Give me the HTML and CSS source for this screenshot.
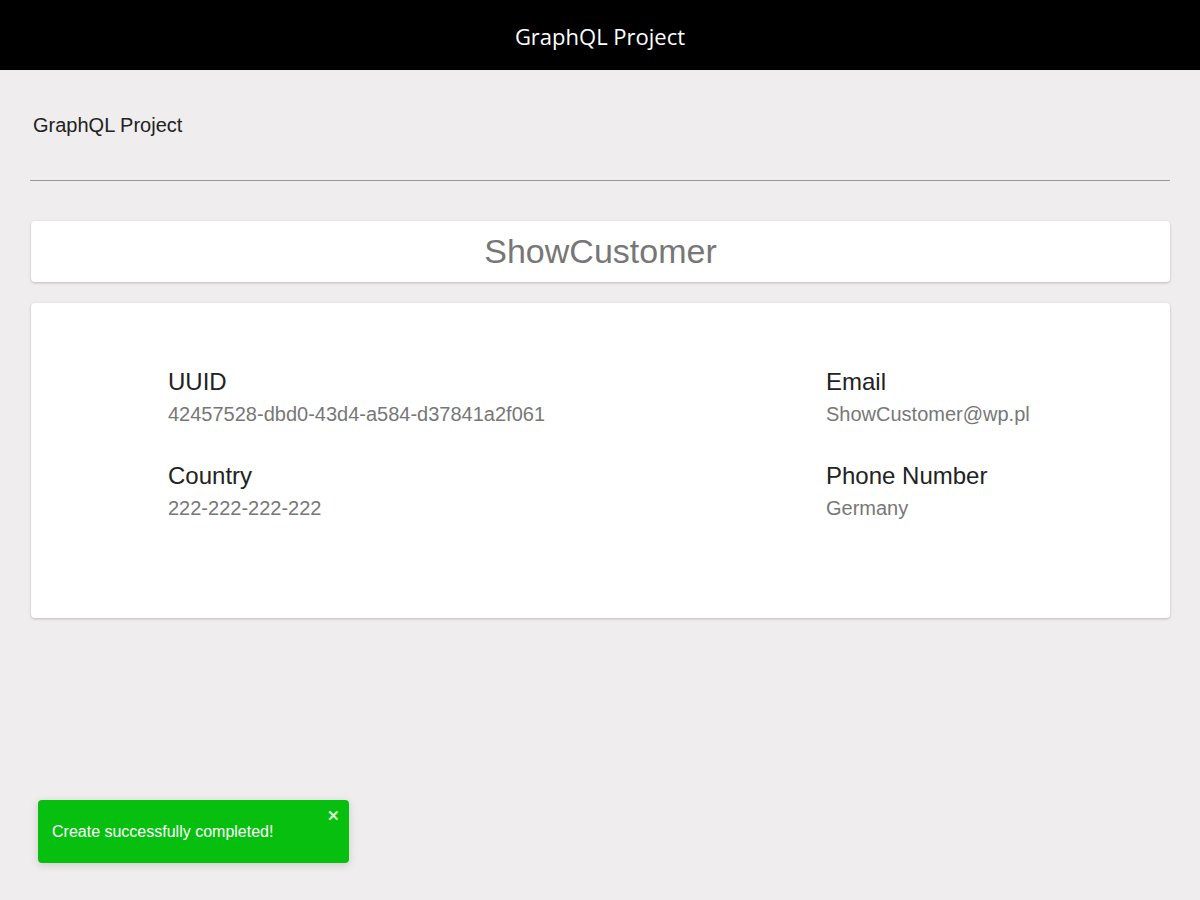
FILE: index.html
```html
<!DOCTYPE html>
<html lang="en">
<head>
<meta charset="utf-8">
<title>GraphQL Project</title>
<link rel="stylesheet" href="styles.css">
</head>
<body>
<header class="topbar">
  <span class="topbar-title">GraphQL Project</span>
</header>
<main class="page">
  <div class="breadcrumb">GraphQL Project</div>
  <hr class="divider">
  <section class="card title-card">
    <h1 class="card-title">ShowCustomer</h1>
  </section>
  <section class="card details-card">
    <div class="details-grid">
      <div class="field">
        <div class="field-label">UUID</div>
        <div class="field-value">42457528-dbd0-43d4-a584-d37841a2f061</div>
      </div>
      <div class="field">
        <div class="field-label">Email</div>
        <div class="field-value">ShowCustomer@wp.pl</div>
      </div>
      <div class="field">
        <div class="field-label">Country</div>
        <div class="field-value">222-222-222-222</div>
      </div>
      <div class="field">
        <div class="field-label">Phone Number</div>
        <div class="field-value">Germany</div>
      </div>
    </div>
  </section>
</main>
<div class="toast">
  <span class="toast-text">Create successfully completed!</span>
  <span class="toast-close">&#x2715;</span>
</div>
</body>
</html>
```

FILE: styles.css
```css
html, body {
  margin: 0;
  padding: 0;
}
body {
  background: #efeded;
  font-family: "Liberation Sans", Arial, sans-serif;
  color: #222;
  min-height: 900px;
}
.topbar {
  height: 70px;
  background: #000;
  display: flex;
  align-items: center;
  justify-content: center;
}
.topbar-title {
  color: #fff;
  font-family: "Open Sans", "Noto Sans", sans-serif;
  font-size: 22px;
  padding-top: 2px;
}
.page {
  padding: 0 30px;
}
.breadcrumb {
  font-size: 20px;
  line-height: 24px;
  color: #222;
  padding: 43px 0 0 3px;
  height: 67px;
}
.divider {
  margin: 0;
  border: 0;
  border-top: 1px solid #999;
}
.card {
  background: #fff;
  border-radius: 4px;
  box-shadow: 0 1px 3px rgba(0,0,0,0.22);
  margin-left: 1px;
}
.title-card {
  margin-top: 40px;
  height: 61px;
  display: flex;
  align-items: center;
  justify-content: center;
}
.card-title {
  margin: 0;
  font-weight: normal;
  font-size: 34px;
  color: #777;
}
.details-card {
  margin-top: 21px;
  height: 315px;
  box-sizing: border-box;
  padding: 64px 0 0 137px;
}
.details-grid {
  display: grid;
  grid-template-columns: 658px 1fr;
  row-gap: 30px;
}
.field-label {
  font-size: 24px;
  line-height: 30px;
  color: #222;
}
.field-value {
  font-size: 20px;
  line-height: 34px;
  color: #777;
}
.toast {
  position: absolute;
  left: 38px;
  top: 800px;
  width: 311px;
  height: 63px;
  box-sizing: border-box;
  background: #07bf0f;
  border-radius: 4px;
  box-shadow: 0 2px 8px rgba(0,0,0,0.15);
  color: #fff;
  display: flex;
  align-items: center;
  padding-left: 14px;
}
.toast-text {
  font-size: 16px;
}
.toast-close {
  position: absolute;
  right: 9px;
  top: 7px;
  font-size: 15px;
  font-weight: bold;
  color: #d6f3d6;
}
```
